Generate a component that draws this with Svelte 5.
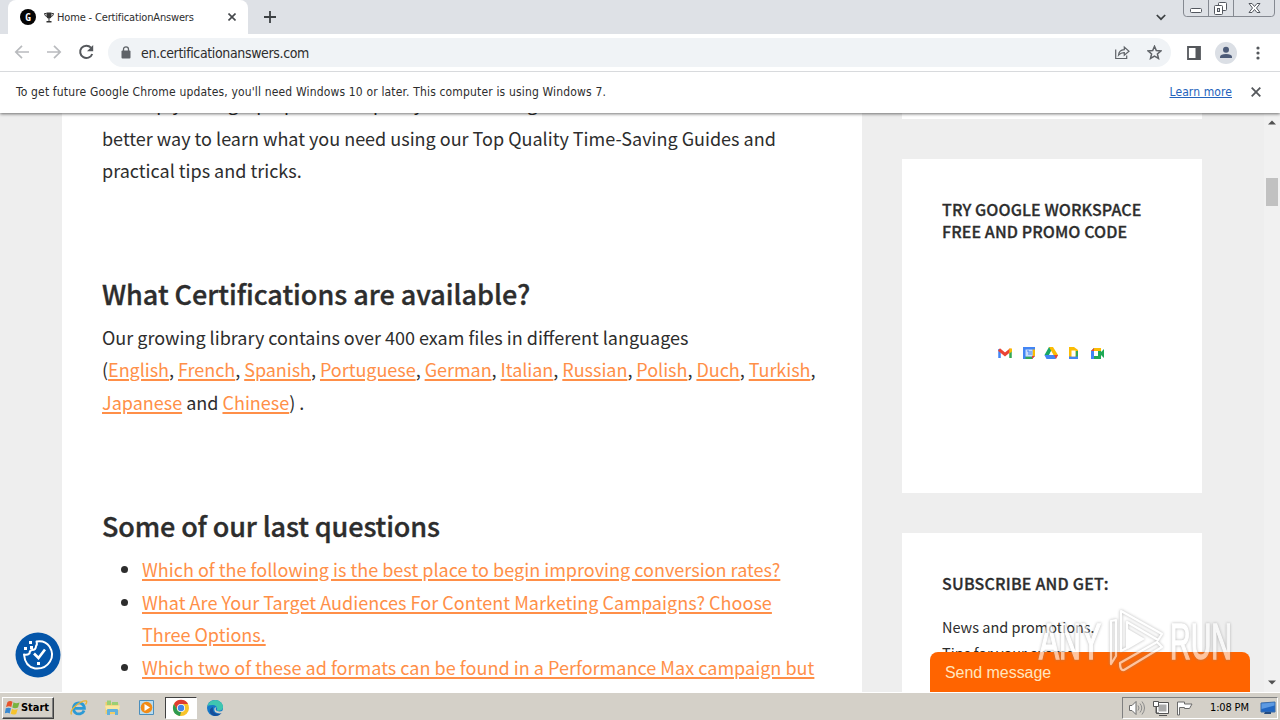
<script>
    const languages = ["English", "French", "Spanish", "Portuguese", "German", "Italian", "Russian", "Polish", "Duch", "Turkish"];
    const apps = ["mail", "calendar", "drive", "docs", "meet"];
</script>

<div class="screen">
    <header class="browser">
        <div class="tabstrip">
            <div class="tab">
                <svg class="favicon" width="16" height="16" viewBox="0 0 16 16">
                    <circle cx="8" cy="8" r="8" fill="#050505" />
                    <text x="8" y="11.500" text-anchor="middle" font-size="10" font-weight="700" fill="#fff" font-family="Open Sans, sans-serif">G</text>
                </svg>
                <svg class="trophy" width="10" height="11" viewBox="0 0 10 11">
                    <path d="M2.500 .5h5v4q0 2-2.500 2.300Q2.500 6.500 2.500 4.500zM4.500 6h1v3h-1zM2.500 9h5v1.500h-5z" fill="#333" />
                    <path d="M2.500 1.500h-2q.1 2.500 2.300 3M7.500 1.500h2q-.1 2.500-2.300 3" fill="none" stroke="#333" />
                </svg>
                <span class="tab-title">Home - CertificationAnswers</span>
                <svg class="tab-close" width="8" height="8" viewBox="0 0 8 8"><path d="M.5.5l7 7m0-7l-7 7" stroke="#45484c" stroke-width="1.600" /></svg>
            </div>
            <svg class="new-tab" width="12" height="12" viewBox="0 0 12 12"><path d="M6 0v12M0 6h12" stroke="#3c4043" stroke-width="1.800" /></svg>
            <svg class="tab-search" width="10" height="7" viewBox="0 0 10 7"><path d="M.8 1L5 5.200 9.200 1" fill="none" stroke="#3c4043" stroke-width="1.700" /></svg>
            <svg class="window-buttons" width="94" height="18" viewBox="0 0 94 18">
                <path d="M1.500 0v13q0 3.500 3 3.500h85q3 0 3-3.500V0M26.500 0v16M51.500 0v16" fill="none" stroke="#858991" />
                <rect x="8.500" y="8.500" width="11" height="4" rx="1" fill="#fff" stroke="#53575f" />
                <rect x="36.500" y="2.500" width="8" height="8" rx="1" fill="#fff" stroke="#53575f" />
                <rect x="32.500" y="5.500" width="8" height="9" rx="1" fill="#fff" stroke="#53575f" />
                <rect x="35.500" y="8.500" width="2" height="3" fill="#dee1e6" stroke="#53575f" />
                <path d="M67 3.500h3l2.500 3 2.500-3h3l-3.500 4.500 3.500 4.500h-3l-2.500-3-2.500 3h-3l3.500-4.500z" fill="#fff" stroke="#53575f" />
            </svg>
        </div>

        <div class="toolbar">
            <svg class="nav" width="84" height="18" viewBox="0 0 84 18">
                <g fill="none" stroke-width="1.700">
                    <path d="M15 9H2m6-6.200L1.800 9 8 15.200" stroke="#b9bbbe" />
                    <path d="M33 9h13m-6-6.200L46.200 9 40 15.200" stroke="#b9bbbe" />
                    <path d="M77 4.700A6.200 6.200 0 1 0 78.200 11" stroke="#55585c" stroke-width="2" />
                </g>
                <path d="M79.200 2v6.200H73z" fill="#55585c" />
            </svg>
            <div class="address">
                <svg width="10" height="13" viewBox="0 0 10 13">
                    <rect x=".5" y="4.500" width="9" height="8" rx="1" fill="#5f6368" />
                    <path d="M2.500 5V3.300a2.500 2.500 0 0 1 5 0V5" fill="none" stroke="#5f6368" stroke-width="1.300" />
                </svg>
                <span class="url">en.certificationanswers.com</span>
                <svg class="share" width="15" height="15" viewBox="0 0 15 15" fill="none" stroke="#5f6368" stroke-width="1.200">
                    <path d="M.7 4.500v9h11v-3" />
                    <path d="M3.500 10.200Q4 5 9.300 4.700V2L14 6.300l-4.700 4V7.600Q6 7.500 3.500 10.200z" />
                </svg>
                <svg class="star" width="15" height="15" viewBox="0 0 15 15"><path d="M7.500 1.300l1.800 4.200 4.600.4-3.500 3 1.100 4.500-4-2.400-4 2.400 1.100-4.500-3.500-3 4.600-.4z" fill="none" stroke="#5f6368" stroke-width="1.500" /></svg>
            </div>
            <svg class="panel" width="14" height="14" viewBox="0 0 14 14"><path d="M1 1h12v12H1z" fill="#fff" stroke="#55585c" stroke-width="1.800" /><path d="M8.500 1H13v12H8.500z" fill="#55585c" /></svg>
            <svg class="profile" width="22" height="22" viewBox="0 0 22 22">
                <circle cx="11" cy="11" r="11" fill="#dbdfe5" />
                <circle cx="11" cy="7.800" r="3" fill="#4c5b78" />
                <path d="M5 16v-1.500Q5.500 12 11 12t6 2.500V16z" fill="#4c5b78" />
            </svg>
            <svg class="menu" width="4" height="14" viewBox="0 0 4 14" fill="#55585c"><circle cx="2" cy="2" r="1.600" /><circle cx="2" cy="7" r="1.600" /><circle cx="2" cy="12" r="1.600" /></svg>
        </div>

        <div class="infobar">
            <span class="notice">To get future Google Chrome updates, you'll need Windows 10 or later. This computer is using Windows 7.</span>
            <span class="learn">Learn more</span>
            <svg width="10" height="10" viewBox="0 0 10 10"><path d="M.7.7l8.600 8.600m0-8.600L.7 9.300" stroke="#55585c" stroke-width="1.800" /></svg>
        </div>
    </header>

    <div class="page">
        <main class="article">
            <p class="intro">
                <span class="line l0">Or simply taking a prep course a pretty tedious thing</span>
                <span class="line l1">better way to learn what you need using our Top Quality Time-Saving Guides and</span>
                <span class="line l2">practical tips and tricks.</span>
            </p>
            <h2 class="first">What Certifications are available?</h2>
            <p>
                <span class="line l3">Our growing library contains over 400 exam files in different languages</span>
                <span class="line l4">({#each languages as language}<a href="#top">{language}</a>{", "}{/each}</span>
                <span class="line l5"><a href="#top">Japanese</a> and <a href="#top">Chinese</a>) .</span>
            </p>
            <h2 class="second">Some of our last questions</h2>
            <ul>
                <li><a class="line q1" href="#top">Which of the following is the best place to begin improving conversion rates?</a></li>
                <li>
                    <a class="line q2" href="#top">What Are Your Target Audiences For Content Marketing Campaigns? Choose</a>
                    <a class="line q3" href="#top">Three Options.</a>
                </li>
                <li><a class="line q4" href="#top">Which two of these ad formats can be found in a Performance Max campaign but</a></li>
            </ul>
        </main>

        <aside>
            <section class="card previous"></section>
            <section class="card workspace">
                <h3><span class="t1">TRY GOOGLE WORKSPACE</span><br /><span class="t2">FREE AND PROMO CODE</span></h3>
                <div class="apps">
                    {#each apps as app}
                        <svg width="14" height="14" viewBox="0 0 14 14">
                            {#if app === "mail"}
                                <path d="M1.500 12V3" stroke="#4285f4" stroke-width="2.500" />
                                <path d="M12.500 12V3" stroke="#34a853" stroke-width="2.500" />
                                <path d="M1 3.500l6 5 6-5" fill="none" stroke="#ea4335" stroke-width="3" />
                                <path d="M11.300 2.500H14v3l-2.700 2z" fill="#fbbc04" />
                            {:else if app === "calendar"}
                                <path d="M2 1h12v9l-3 3H2z" fill="#4285f4" />
                                <path d="M11.500 3.500H14V10h-2.500z" fill="#fbbc04" />
                                <path d="M4.500 10.500h7V13h-7z" fill="#34a853" />
                                <path d="M4.500 3.500h7v7h-7z" fill="#c9dcfb" />
                                <path d="M14 10l-3 3v-3z" fill="#ea4335" />
                                <path d="M6 5h2v4M10 5v4" fill="none" stroke="#4285f4" />
                            {:else if app === "drive"}
                                <path d="M5 1h4L4 13l-3.500-4z" fill="#16a765" />
                                <path d="M5 1h4l5 8H9.500z" fill="#fbbc04" />
                                <path d="M3 9h11l-2.500 4h-9L.5 9z" fill="#4285f4" />
                                <path d="M10 9h4l-2 4z" fill="#ea4335" />
                                <path d="M7 5l2 4H5z" fill="#fff" />
                            {:else if app === "docs"}
                                <path d="M2 1h5l4 3v9H2z" fill="#fbbc04" />
                                <path d="M8.500 5H11v6H8.500z" fill="#34a853" />
                                <path d="M2 10.500h9V13H2z" fill="#4285f4" />
                                <path d="M4.500 4.500h4v6h-4z" fill="#fff" />
                            {:else}
                                <path d="M1 5l3-3h7v4l3-3v9l-3-3v4H1z" fill="#1ea955" />
                                <path d="M4 2h7v3H4z" fill="#fbbc04" />
                                <path d="M1 5l3-3v3z" fill="#ea4335" />
                                <path d="M1 5h3v8H1z" fill="#4285f4" />
                                <path d="M4 5h4v5H4z" fill="#fff" />
                            {/if}
                        </svg>
                    {/each}
                </div>
            </section>
            <section class="card subscribe">
                <h3><span class="t3">SUBSCRIBE AND GET:</span></h3>
                <p><span class="n1">News and promotions.</span><br /><span class="n2">Tips for your exams.</span></p>
            </section>
        </aside>

        <div class="scrollbar">
            <svg width="8" height="5" viewBox="0 0 8 5"><path d="M0 4.500L4 .5l4 4z" fill="#505050" /></svg>
            <div class="thumb"></div>
            <svg width="8" height="5" viewBox="0 0 8 5"><path d="M0 .5l4 4 4-4z" fill="#505050" /></svg>
        </div>

        <svg class="cookie" width="46" height="46" viewBox="0 0 46 46">
            <circle cx="23" cy="23" r="22.500" fill="#0455a9" />
            <path d="M21.500 9.500Q30 8 34.500 14.500q5 8 .5 15-5 8-15 7-10-2-11-14 3 1 5.500-1 0-3 2.500-3.500 4 0 4-4 1.500-1.500.5-4.500z" fill="none" stroke="#fff" stroke-width="2" stroke-linejoin="round" />
            <path d="M19 21.500l4.500 4.500 6.500-8.500" fill="none" stroke="#fff" stroke-width="2.600" />
            <path d="M14 9h3v3h-3zM9 15h3v3H9zM15 14h3v3h-3zM22 30h3v3h-3z" fill="#fff" />
        </svg>

        <div class="chat">Send message</div>

        <svg class="watermark" width="210" height="74" viewBox="0 0 210 74">
            <g class="mark">
                <text x="9" y="53" textLength="62" lengthAdjust="spacingAndGlyphs">ANY</text>
                <text x="140" y="53" textLength="62" lengthAdjust="spacingAndGlyphs">RUN</text>
                <path class="outline" d="M86 50l-5 8V15l5-1zM91 45V5l41 23-4 6-31-18v26zM127 36l5 5-38 23q-4 1-4-7z" />
                <path d="M98 23l17 10-17 10z" />
            </g>
        </svg>
    </div>

    <footer class="taskbar">
        <button class="start">
            <svg width="15" height="15" viewBox="0 0 15 15">
                <path d="M2.500 2Q5 .2 7.500 1.800L6.300 7Q4 5.500 1 7z" fill="#e7532b" />
                <path d="M8.500 2.300Q11 4 14.500 2.500L13 7.500q-3 1.500-5.700 0z" fill="#78b340" />
                <path d="M.8 8.300Q3.500 7 6 8.300L4.700 13.500Q2.500 12-.2 13.300z" fill="#3989d1" />
                <path d="M7 8.700q2.500 1.800 5.700.2l-1.500 5q-3 1.200-5.400-.2z" fill="#f6c32d" />
            </svg>
            <span>Start</span>
        </button>
        <div class="quick">
            <svg width="18" height="18" viewBox="0 0 18 18">
                <path d="M14 11.500A5.500 5.500 0 1 1 14.400 9.300H4" fill="none" stroke="#2c9ad5" stroke-width="2.800" />
                <path d="M1.500 15.500Q-.5 12 6 6.500T16.500 2q.8 1.200-1 3.500" fill="none" stroke="#e9b435" stroke-width="1.300" />
            </svg>
            <svg width="18" height="18" viewBox="0 0 18 18">
                <path d="M1.500 3h5l1 1.500h7V15h-13z" fill="#efcd68" />
                <path d="M3 1.500h4V6H3zM8 3h6v3H8z" fill="#9bcf74" />
                <path d="M1 6.500h15L15 11H2z" fill="#f9e7a0" />
                <path d="M3 16v-5q0-1 1-1h9q1 0 1 1v5h-3v-3H6v3z" fill="#61b1dd" />
            </svg>
            <svg width="18" height="18" viewBox="0 0 18 18">
                <path d="M1.500 1.500h14v14h-14z" fill="#b9dcef" stroke="#4b8ebc" />
                <circle cx="8.500" cy="8.500" r="5.800" fill="#f28b16" />
                <path d="M6.500 5l5.500 3.500L6.500 12z" fill="#fff" />
            </svg>
            <div class="running">
                <svg width="18" height="18" viewBox="0 0 18 18">
                    <circle cx="9" cy="9" r="8" fill="#f8c42b" />
                    <path d="M2 5A8 8 0 0 1 16 5H9L5.500 11z" fill="#df3c30" />
                    <path d="M2 5l4 7 3 1-1 4A8 8 0 0 1 2 5z" fill="#2e9b50" />
                    <circle cx="9" cy="9" r="4" fill="#fff" />
                    <circle cx="9" cy="9" r="3.200" fill="#4285e8" />
                </svg>
            </div>
            <svg width="18" height="18" viewBox="0 0 18 18">
                <circle cx="9" cy="9" r="8" fill="#1678c8" />
                <path d="M1.500 7Q3 1 9.500 1 17 2 17 8.500q-1 4-6 3 1-5-4-5.500-4 0-5.500 1z" fill="#3fc6b0" />
                <path d="M7 8q-1 5 3 6.500 3 1 6-1-3 4-8 3.500-5-2-4-6.500 1-2 3-2.500z" fill="#164f9b" />
                <path d="M10.500 8q-2 2.500.5 4 3 1.200 6-.5l1 2-4 1Q7 14 8.500 9z" fill="#d4d0c8" />
            </svg>
        </div>
        <div class="tray">
            <svg width="68" height="18" viewBox="0 0 68 18" fill="#fff" stroke="#6b6b6b">
                <path d="M1.500 6.500H4l4-4v13l-4-4H1.500z" />
                <path d="M10 6.500q2 2.500 0 5M12 4.500q3.500 4.500 0 9M14 2.500q5 6.500 0 13" fill="none" stroke="#8a8a8a" />
                <path d="M29.500 4.500h10v9h-10z" fill="#aaa" stroke="#fff" stroke-width="2" />
                <path d="M28.500 3.500h12v11h-12zM31 16.500h8M25.500 2.500h5v5h-5zM28 7v7h3" fill="none" stroke="#555" />
                <path d="M26 3h4v4h-4z" stroke="none" />
                <path d="M49.500 16V3h7v2h7.500l-2.500 4.500h-5v-1h-5V16z" />
            </svg>
            <span>1:08 PM</span>
            <svg class="desktop" width="16" height="14" viewBox="0 0 16 14">
                <path d="M1 2l14-1v10H1z" fill="#2166c2" stroke="#3c6ca7" />
                <path d="M1.500 2.500L14.500 1.500v3L1.500 8z" fill="#5d9ae2" />
                <path d="M5 11h6v2H4z" fill="#254c80" />
            </svg>
        </div>
    </footer>
</div>

<style>
    :global(body) {
        overflow: hidden;
    }

    .screen {
        width: 1280px;
        height: 720px;
        display: flex;
        flex-direction: column;
        overflow: hidden;
        color: #2d2d2d;
        background: #eee;
        font-family: "DejaVu Sans Condensed", "DejaVu Sans", sans-serif;
        font-stretch: condensed;
    }

    svg {
        display: block;
        flex: none;
    }

    .browser {
        position: relative;
        z-index: 2;
        height: 113px;
        flex: none;
        background: #fff;
        box-shadow: 0 1px 3px rgba(0, 0, 0, .55);
    }

    .tabstrip {
        height: 34px;
        display: flex;
        background: #dee1e6;
        padding-left: 8px;
    }

    .tab {
        width: 240px;
        box-sizing: border-box;
        display: flex;
        align-items: center;
        padding: 0 12px;
        background: #fff;
        border-radius: 8px 8px 0 0;
        white-space: nowrap;
    }

    .trophy {
        margin-left: 8px;
    }

    .tab-title {
        margin-left: 3px;
        width: 138px;
        font-size: 11px;
        letter-spacing: -.16px;
    }

    .tab-close {
        margin-left: auto;
    }

    .new-tab {
        margin: 11px 0 0 16px;
    }

    .tab-search {
        margin: 14px 0 0 auto;
    }

    .window-buttons {
        margin: 0 4px 0 16px;
    }

    .toolbar {
        height: 37px;
        display: flex;
        align-items: center;
        padding: 0 20px 0 14px;
        border-bottom: 1px solid #d8dadd;
    }

    .nav {
        margin-bottom: 1px;
    }

    .address {
        width: 1063px;
        height: 29px;
        box-sizing: border-box;
        display: flex;
        align-items: center;
        margin-left: 10px;
        padding: 0 9px 0 13px;
        border-radius: 15px;
        background: #f0f3f6;
    }

    .url {
        margin-left: 10px;
        font-size: 14px;
        letter-spacing: -.36px;
    }

    .share {
        margin-left: auto;
    }

    .star {
        margin-left: 17px;
    }

    .panel {
        margin-left: 16px;
    }

    .profile {
        margin-left: 14px;
    }

    .menu {
        margin-left: auto;
    }

    .infobar {
        height: 41px;
        box-sizing: border-box;
        display: flex;
        align-items: center;
        padding: 0 19px 1px 16px;
        font-size: 12px;
        white-space: nowrap;
    }

    .notice {
        letter-spacing: .16px;
    }

    .learn {
        margin-left: auto;
        margin-right: 19px;
        color: #2463bc;
        text-decoration: underline;
        letter-spacing: .1px;
    }

    .page {
        position: relative;
        flex: 1;
        min-height: 0;
        display: flex;
        overflow: hidden;
        font-family: "Noto Sans CJK SC", sans-serif;
        font-stretch: normal;
    }

    .article {
        width: 800px;
        height: 580px;
        box-sizing: border-box;
        margin-left: 62px;
        padding: 0 40px;
        background: #fff;
        font-size: 18px;
    }

    p, ul, h2, h3 {
        margin: 0;
    }

    .intro {
        margin-top: -24px;
    }

    .line {
        display: block;
        width: max-content;
        height: 32.500px;
        line-height: 32.500px;
        white-space: nowrap;
    }

    .l0 {
        line-height: 29.500px;
        letter-spacing: -.03px;
    }

    .l4 {
        letter-spacing: -.03px;
    }

    a {
        color: #ff8f48;
        text-decoration: underline;
        text-decoration-thickness: 2px;
        text-underline-offset: 2px;
    }

    .q1 {
        letter-spacing: .02px;
    }

    .q2, .q4 {
        letter-spacing: .035px;
    }

    h2 {
        height: 40px;
        line-height: 40px;
        font-size: 27px;
        font-weight: 500;
        white-space: nowrap;
        width: max-content;
        -webkit-text-stroke: .35px #2d2d2d;
    }

    .first {
        margin-top: 87px;
        margin-bottom: 7px;
        letter-spacing: -.03px;
    }

    .second {
        margin-top: 88px;
        margin-bottom: 7px;
        letter-spacing: -.13px;
    }

    ul {
        padding-left: 40px;
    }

    aside {
        width: 300px;
        margin-left: 40px;
    }

    .card {
        background: #fff;
        box-sizing: border-box;
        padding: 39px 40px 40px;
        margin-bottom: 40px;
    }

    .previous {
        height: 6px;
        padding: 0;
    }

    .workspace {
        height: 334px;
    }

    .subscribe {
        height: 300px;
    }

    h3 {
        font-size: 16px;
        line-height: 22px;
        font-weight: 500;
        white-space: nowrap;
        letter-spacing: .1px;
        -webkit-text-stroke: .3px #2d2d2d;
    }

    .t3 {
        letter-spacing: .22px;
    }

    .apps {
        display: flex;
        justify-content: center;
        gap: 9px;
        margin: 104px 2px 0 0;
    }

    .subscribe p {
        margin-top: 20px;
        font-size: 14.500px;
        line-height: 26px;
        white-space: nowrap;
    }

    .scrollbar {
        width: 16px;
        box-sizing: border-box;
        margin-left: auto;
        padding: 7px 0;
        display: flex;
        flex-direction: column;
        align-items: center;
        background: #f1f1f1;
    }

    .thumb {
        width: 12px;
        height: 28px;
        margin: 53px 0 auto;
        background: #c1c1c1;
    }

    .cookie {
        position: absolute;
        left: 14.500px;
        top: 518.500px;
    }

    .chat {
        position: absolute;
        left: 930px;
        bottom: 0;
        width: 320px;
        height: 40px;
        box-sizing: border-box;
        padding-left: 15px;
        border-radius: 8px 8px 0 0;
        background: #ff6400;
        color: #ffe6bf;
        font: 16px/41px "Liberation Sans", sans-serif;
        letter-spacing: -.05px;
    }

    .watermark {
        position: absolute;
        left: 1030px;
        top: 493px;
    }

    .mark {
        opacity: .62;
        fill: #fff;
        filter: drop-shadow(0 0 1.500px #888);
        font: 50px "Liberation Sans Narrow", "Liberation Sans", sans-serif;
    }

    .mark text {
        stroke: #fff;
        stroke-width: 1.500px;
    }

    .outline {
        fill: none;
        stroke: #fff;
        stroke-width: 2.200;
        stroke-linejoin: round;
    }

    .taskbar {
        height: 28px;
        box-sizing: border-box;
        flex: none;
        display: flex;
        align-items: center;
        padding: 2px 2px 0;
        border-top: 1px solid #fff;
        background: #d4d0c8;
    }

    .start {
        width: 52px;
        height: 22px;
        display: flex;
        align-items: center;
        padding: 0 2px;
        gap: 1px;
        border: 1px solid;
        border-color: #fff #404040 #404040 #fff;
        box-shadow: inset -1px -1px #808080;
        background: #d4d0c8;
        color: #000;
        font: bold 11px "DejaVu Sans Condensed", sans-serif;
        letter-spacing: -.05px;
    }

    .quick {
        display: flex;
        align-items: center;
        gap: 16px;
        margin-left: 16px;
    }

    .running {
        width: 32px;
        height: 22px;
        box-sizing: border-box;
        display: grid;
        place-items: center;
        margin: 0 -7px;
        background: #fff;
        border: 1px solid;
        border-color: #404040 #fff #fff #404040;
    }

    .tray {
        width: 156px;
        height: 22px;
        box-sizing: border-box;
        margin-left: auto;
        padding: 0 1px 0 5px;
        display: flex;
        align-items: center;
        border: 1px solid;
        border-color: #808080 #fff #fff #808080;
        color: #000;
        font-size: 11px;
        white-space: nowrap;
    }

    .tray span {
        margin-left: 14px;
        letter-spacing: -.15px;
    }

    .desktop {
        margin-left: auto;
    }
</style>
